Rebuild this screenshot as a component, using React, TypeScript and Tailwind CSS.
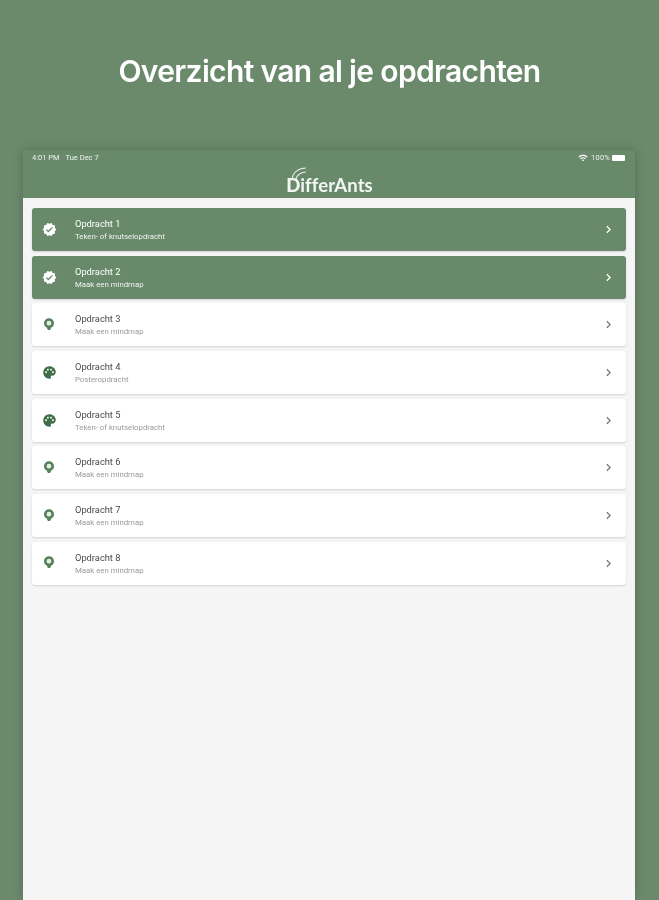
import React from 'react';
import { MdVerified, MdPalette, MdChevronRight, MdWifi } from 'react-icons/md';

type Kind = 'done' | 'bulb' | 'palette';

interface Task {
  title: string;
  subtitle: string;
  kind: Kind;
}

const tasks: Task[] = [
  { title: 'Opdracht 1', subtitle: 'Teken- of knutselopdracht', kind: 'done' },
  { title: 'Opdracht 2', subtitle: 'Maak een mindmap', kind: 'done' },
  { title: 'Opdracht 3', subtitle: 'Maak een mindmap', kind: 'bulb' },
  { title: 'Opdracht 4', subtitle: 'Posteropdracht', kind: 'palette' },
  { title: 'Opdracht 5', subtitle: 'Teken- of knutselopdracht', kind: 'palette' },
  { title: 'Opdracht 6', subtitle: 'Maak een mindmap', kind: 'bulb' },
  { title: 'Opdracht 7', subtitle: 'Maak een mindmap', kind: 'bulb' },
  { title: 'Opdracht 8', subtitle: 'Maak een mindmap', kind: 'bulb' },
];

function BulbIcon() {
  return (
    <svg viewBox="0 0 12 14" className="w-[12px] h-[13px] -mt-[1px]">
      <circle cx="6" cy="5.6" r="4" fill="#e4ece4" stroke="#55805b" strokeWidth="2.8" />
      <path d="M4 10h4v1.6L7 13H5l-1-1.4z" fill="#55805b" />
    </svg>
  );
}

function TaskIcon({ kind }: { kind: Kind }) {
  if (kind === 'done') return <MdVerified className="w-[15px] h-[15px] text-white" />;
  if (kind === 'palette') return <MdPalette className="w-[15px] h-[15px] text-[#3f6f49]" />;
  return <BulbIcon />;
}

function TaskRow({ task }: { task: Task }) {
  const done = task.kind === 'done';
  return (
    <div
      className={`flex items-center h-[43px] rounded-[3px] shadow-[0_1px_2px_rgba(0,0,0,0.14)] ${
        done ? 'bg-[#688a6b]' : 'bg-white'
      }`}
    >
      <div className="flex justify-center w-[34px]">
        <TaskIcon kind={task.kind} />
      </div>
      <div className="ml-[9px] flex-1 flex flex-col gap-[3px] pt-[1px]">
        <div className={`text-[9.3px] leading-[11px] ${done ? 'text-white' : 'text-[#4a4a4a]'}`}>{task.title}</div>
        <div className={`text-[7.8px] leading-[10px] ${done ? 'text-[#f0f4f0]' : 'text-[#9a9a9a]'}`}>{task.subtitle}</div>
      </div>
      <MdChevronRight className={`w-[15px] h-[15px] mr-[10px] ${done ? 'text-white' : 'text-[#777777]'}`} />
    </div>
  );
}

export default function App() {
  return (
    <div className="h-[900px] overflow-hidden bg-[#6b8a6c] font-['Roboto',sans-serif]">
      <h1 className="pt-[52px] h-[150px] text-center font-['Inter',sans-serif] text-[30px] leading-[38px] tracking-[-0.65px] font-semibold text-white blur-[0.5px]">
        Overzicht van al je opdrachten
      </h1>

      <div className="mx-[23px] w-[612px] h-[750px] flex flex-col shadow-[0_0_10px_rgba(0,0,0,0.22)] blur-[0.5px]">
        <div className="h-[48px] bg-[#688a6b] flex flex-col">
          <div className="flex items-center justify-between h-[15px] pl-[9px] pr-[10px] text-[7.5px] text-[#eef3ee]">
            <div className="flex gap-[6px]">
              <span>4:01 PM</span>
              <span>Tue Dec 7</span>
            </div>
            <div className="flex items-center gap-[2px]">
              <MdWifi className="w-[10px] h-[10px] text-white mr-[1px]" />
              <span className="tracking-[0.2px]">100%</span>
              <div className="w-[13px] h-[6px] bg-white rounded-[1px]" />
            </div>
          </div>
          <div className="flex-1 flex justify-center items-end">
            <div className="relative font-['Lato',sans-serif] font-bold text-[18.5px] leading-[24px] text-[#f3f6f3] tracking-[0.1px] mb-[1px] ml-[1px]">
              <span className="font-black">D</span>ifferAnts
              <svg viewBox="0 0 24 16" className="absolute left-[3px] -top-[8px] w-[24px] h-[16px]" fill="none" stroke="#e6ece6" strokeWidth="1.2">
                <path d="M3 14C4 7 10 3 17 3" />
                <path d="M7 14C8 10 12 7 17 7" />
              </svg>
            </div>
          </div>
        </div>

        <div className="flex-1 bg-[#f5f5f5] px-[9px] pt-[10px] flex flex-col gap-[4.7px]">
          {tasks.map((task) => (
            <TaskRow key={task.title} task={task} />
          ))}
        </div>
      </div>
    </div>
  );
}
